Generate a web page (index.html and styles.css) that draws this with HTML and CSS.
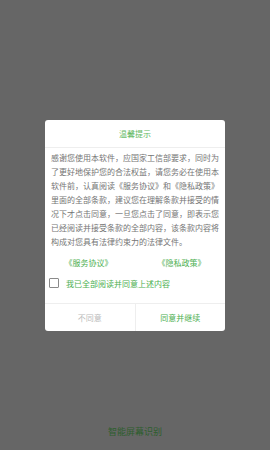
FILE: index.html
```html
<!DOCTYPE html>
<html lang="zh-CN">
<head>
  <meta charset="UTF-8">
  <meta name="viewport" content="width=device-width, initial-scale=1.0">
  <title>智能屏幕识别</title>
  <link rel="stylesheet" href="styles.css">
</head>
<body>

<div class="screen">
  <div class="dialog">
    <div class="dialog-title">温馨提示</div>
    <div class="dialog-body">感谢您使用本软件，应国家工信部要求，同时为了更好地保护您的合法权益，请您务必在使用本软件前，认真阅读《服务协议》和《隐私政策》里面的全部条款，建议您在理解条款并接受的情况下才点击同意，一旦您点击了同意，即表示您已经阅读并接受条款的全部内容，该条款内容将构成对您具有法律约束力的法律文件。</div>
    <div class="links">
      <a class="link">《服务协议》</a>
      <a class="link">《隐私政策》</a>
    </div>
    <label class="agree">
      <span class="checkbox"></span>
      <span>我已全部阅读并同意上述内容</span>
    </label>
    <div class="buttons">
      <button class="btn btn-cancel">不同意</button>
      <button class="btn btn-ok">同意并继续</button>
    </div>
  </div>
  <div class="app-name">智能屏幕识别</div>
</div>

</body>
</html>
```

FILE: styles.css
```css
body {
  margin: 0;
  padding: 0;
  background-color: #666666;
  font-family: "Noto Sans CJK SC", "Noto Sans", sans-serif;
}
.screen {
  width: 270px;
  height: 450px;
  display: flex;
  flex-direction: column;
  align-items: center;
}
.dialog {
  width: 180px;
  margin-top: 120px;
  background-color: #ffffff;
  border-radius: 3px;
}
.dialog-title {
  height: 27px;
  line-height: 27px;
  text-align: center;
  font-size: 8px;
  color: #62b862;
  border-bottom: 1px solid #eeeeee;
}
.dialog-body {
  padding: 3px 6px 0;
  font-size: 8px;
  line-height: 14px;
  color: #757575;
}
.links {
  display: flex;
  height: 22px;
  align-items: center;
  margin-top: 2px;
}
.link {
  flex: 1;
  text-align: center;
  font-size: 8px;
  color: #4caf50;
}
.link:first-child {
  padding-right: 6px;
}
.agree {
  display: flex;
  align-items: center;
  gap: 7px;
  height: 20px;
  padding-left: 4px;
  font-size: 8px;
  color: #4caf50;
}
.checkbox {
  width: 8px;
  height: 8px;
  border: 1px solid #8a8a8a;
  border-radius: 1px;
}
.buttons {
  display: flex;
  margin-top: 10px;
  border-top: 1px solid #eeeeee;
}
.btn {
  flex: 1;
  height: 27px;
  background: none;
  border: none;
  padding: 0;
  font-family: inherit;
  font-size: 8px;
  cursor: pointer;
}
.btn-cancel {
  color: #bbbbbb;
  border-right: 1px solid #eeeeee;
}
.btn-ok {
  color: #4caf50;
}
.app-name {
  margin-top: 94px;
  font-size: 9px;
  color: #2e5e2e;
}
```
